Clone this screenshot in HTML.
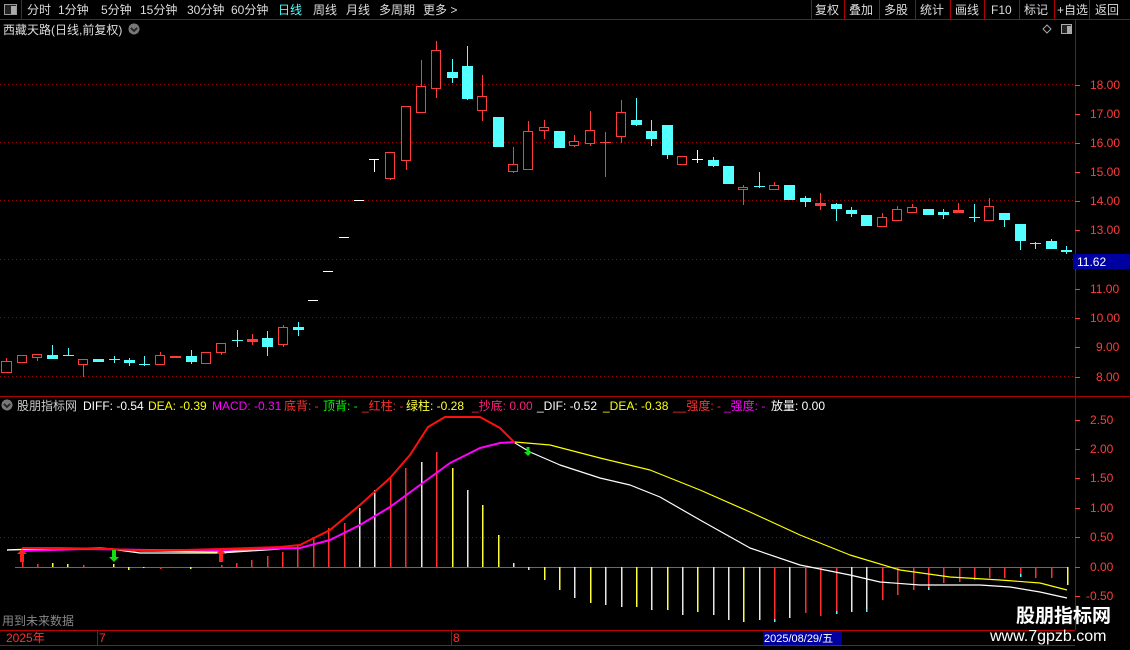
<!DOCTYPE html>
<html><head><meta charset="utf-8"><style>
body{margin:0;background:#000;width:1130px;height:650px;overflow:hidden;font-family:"Liberation Sans","Noto Sans CJK SC",sans-serif;font-size:12px;color:#ddd}
svg{position:absolute;left:0;top:0}
text{font-family:"Liberation Sans","Noto Sans CJK SC",sans-serif;font-size:12px}
.r{fill:#000;stroke:#ff3c3c;stroke-width:1}
.c{fill:#54ffff}
</style></head><body>
<svg width="1130" height="650" viewBox="0 0 1130 650" shape-rendering="crispEdges">
<!-- top bar -->
<line x1="0" y1="19.5" x2="1130" y2="19.5" stroke="#b00000"/>
<line x1="21.5" y1="0" x2="21.5" y2="19" stroke="#b00000"/>
<rect x="4.5" y="4.5" width="12" height="10" fill="#222" stroke="#999"/><rect x="11" y="6" width="5" height="8" fill="#aaa"/>
<g fill="#ddd">
<text x="27" y="14">分时</text><text x="58" y="14">1分钟</text><text x="101" y="14">5分钟</text><text x="140" y="14">15分钟</text><text x="187" y="14">30分钟</text><text x="231" y="14">60分钟</text>
<text x="278" y="14" fill="#54ffff">日线</text><text x="313" y="14">周线</text><text x="346" y="14">月线</text><text x="379" y="14">多周期</text><text x="423" y="14">更多 &gt;</text>
<text x="815" y="14">复权</text><text x="849" y="14">叠加</text><text x="884" y="14">多股</text><text x="920" y="14">统计</text><text x="955" y="14">画线</text><text x="991" y="14">F10</text><text x="1024" y="14">标记</text><text x="1057" y="14">+自选</text><text x="1095" y="14">返回</text>
</g>
<g stroke="#b00000"><line x1="811.5" y1="0" x2="811.5" y2="19"/><line x1="844.5" y1="0" x2="844.5" y2="19"/><line x1="879.5" y1="0" x2="879.5" y2="19"/><line x1="915.5" y1="0" x2="915.5" y2="19"/><line x1="950.5" y1="0" x2="950.5" y2="19"/><line x1="984.5" y1="0" x2="984.5" y2="19"/><line x1="1019.5" y1="0" x2="1019.5" y2="19"/><line x1="1054.5" y1="0" x2="1054.5" y2="19"/><line x1="1089.5" y1="0" x2="1089.5" y2="19"/></g>
<text x="3" y="34" fill="#ddd">西藏天路(日线,前复权)</text>
<circle cx="134" cy="29" r="5.5" fill="#777"/><path d="M131 28l3 3 3-3" stroke="#222" fill="none" stroke-width="1.5"/>
<path d="M1047 25l4 4-4 4-4-4z" fill="none" stroke="#aaa" shape-rendering="auto"/>
<rect x="1061.5" y="24.5" width="10" height="9" fill="#222" stroke="#aaa"/><rect x="1067" y="26" width="4" height="7" fill="#aaa"/>
<!-- right axis -->
<line x1="1075.5" y1="20" x2="1075.5" y2="630" stroke="#b00000"/>
<line x1="0" y1="396.5" x2="1130" y2="396.5" stroke="#b00000"/>
<g stroke="#a00000" stroke-dasharray="1 3"><line x1="0" y1="84.5" x2="1075" y2="84.5"/><line x1="0" y1="142.5" x2="1075" y2="142.5"/><line x1="0" y1="200.5" x2="1075" y2="200.5"/><line x1="0" y1="259.5" x2="1075" y2="259.5"/><line x1="0" y1="317.5" x2="1075" y2="317.5"/><line x1="0" y1="376.5" x2="1075" y2="376.5"/><line x1="0" y1="537.5" x2="1075" y2="537.5"/></g>
<g fill="#ff3c3c"><text x="1090" y="89">18.00</text><text x="1090" y="118">17.00</text><text x="1090" y="147">16.00</text><text x="1090" y="176">15.00</text><text x="1090" y="205">14.00</text><text x="1090" y="234">13.00</text><text x="1090" y="293">11.00</text><text x="1090" y="322">10.00</text><text x="1096" y="351">9.00</text><text x="1096" y="381">8.00</text>
<text x="1090" y="424">2.50</text><text x="1090" y="453">2.00</text><text x="1090" y="482">1.50</text><text x="1090" y="512">1.00</text><text x="1090" y="541">0.50</text><text x="1090" y="571">0.00</text><text x="1086" y="600">-0.50</text></g>
<g stroke="#ff3c3c"><line x1="1075" y1="85.5" x2="1080" y2="85.5"/><line x1="1075" y1="114.5" x2="1080" y2="114.5"/><line x1="1075" y1="143.5" x2="1080" y2="143.5"/><line x1="1075" y1="172.5" x2="1080" y2="172.5"/><line x1="1075" y1="201.5" x2="1080" y2="201.5"/><line x1="1075" y1="230.5" x2="1080" y2="230.5"/><line x1="1075" y1="289.5" x2="1080" y2="289.5"/><line x1="1075" y1="318.5" x2="1080" y2="318.5"/><line x1="1075" y1="347.5" x2="1080" y2="347.5"/><line x1="1075" y1="377.5" x2="1080" y2="377.5"/>
<line x1="1075" y1="420.5" x2="1080" y2="420.5"/><line x1="1075" y1="449.5" x2="1080" y2="449.5"/><line x1="1075" y1="478.5" x2="1080" y2="478.5"/><line x1="1075" y1="508.5" x2="1080" y2="508.5"/><line x1="1075" y1="537.5" x2="1080" y2="537.5"/><line x1="1075" y1="567.5" x2="1080" y2="567.5"/><line x1="1075" y1="596.5" x2="1080" y2="596.5"/></g>
<rect x="1073" y="254" width="57" height="15" fill="#0000a0"/><text x="1077" y="266" fill="#fff">11.62</text>

<!-- candles -->
<g stroke="#ff3c3c">
<line x1="6.5" y1="358" x2="6.5" y2="373"/><line x1="37.5" y1="354" x2="37.5" y2="361"/><line x1="83.5" y1="359" x2="83.5" y2="377"/><line x1="160.5" y1="352" x2="160.5" y2="364"/><line x1="221.5" y1="343" x2="221.5" y2="355"/><line x1="252.5" y1="334" x2="252.5" y2="345"/><line x1="283.5" y1="325" x2="283.5" y2="347"/>
<line x1="390.5" y1="152" x2="390.5" y2="180"/><line x1="406.5" y1="106" x2="406.5" y2="170"/><line x1="421.5" y1="60" x2="421.5" y2="112"/><line x1="436.5" y1="41" x2="436.5" y2="98"/><line x1="482.5" y1="75" x2="482.5" y2="121"/><line x1="513.5" y1="147" x2="513.5" y2="173"/><line x1="528.5" y1="121" x2="528.5" y2="169"/><line x1="544.5" y1="120" x2="544.5" y2="139"/>
<line x1="574.5" y1="135" x2="574.5" y2="147"/><line x1="590.5" y1="111" x2="590.5" y2="146"/><line x1="605.5" y1="132" x2="605.5" y2="177"/><line x1="600" y1="142.5" x2="611" y2="142.5"/><line x1="621.5" y1="100" x2="621.5" y2="143"/>
<line x1="743.5" y1="185" x2="743.5" y2="205"/><line x1="774.5" y1="182" x2="774.5" y2="189"/><line x1="820.5" y1="193" x2="820.5" y2="210"/><line x1="882.5" y1="213" x2="882.5" y2="226"/><line x1="897.5" y1="206" x2="897.5" y2="220"/><line x1="912.5" y1="204" x2="912.5" y2="212"/><line x1="958.5" y1="203" x2="958.5" y2="213"/><line x1="989.5" y1="198" x2="989.5" y2="221"/>
</g>
<g class="r">
<rect x="1.5" y="361.5" width="10" height="11"/><rect x="17.5" y="355.5" width="9" height="7"/><rect x="32.5" y="354.5" width="9" height="3"/><rect x="78.5" y="359.5" width="9" height="5"/><rect x="155.5" y="355.5" width="9" height="9"/><rect x="201.5" y="352.5" width="9" height="11"/><rect x="216.5" y="343.5" width="9" height="9"/><rect x="278.5" y="327.5" width="9" height="17"/>
<rect x="385.5" y="152.5" width="9" height="26"/><rect x="401.5" y="106.5" width="9" height="54"/><rect x="416.5" y="86.5" width="9" height="26"/><rect x="431.5" y="50.5" width="9" height="38"/><rect x="477.5" y="96.5" width="9" height="14"/><rect x="508.5" y="164.5" width="9" height="7"/><rect x="523.5" y="131.5" width="9" height="38"/><rect x="539.5" y="127.5" width="9" height="3"/>
<rect x="569.5" y="141.5" width="9" height="4"/><rect x="585.5" y="130.5" width="9" height="13"/><rect x="616.5" y="112.5" width="9" height="24"/><rect x="677.5" y="156.5" width="9" height="8"/><rect x="738.5" y="187.5" width="9" height="2"/><rect x="769.5" y="185.5" width="9" height="4"/>
<rect x="877.5" y="217.5" width="9" height="9"/><rect x="892.5" y="209.5" width="9" height="11"/><rect x="907.5" y="207.5" width="9" height="5"/><rect x="984.5" y="206.5" width="9" height="14"/>
</g>
<g fill="#ff3c3c"><rect x="170" y="356" width="11" height="2"/><rect x="247" y="339" width="11" height="3"/><rect x="815" y="203" width="11" height="3"/><rect x="953" y="210" width="11" height="3"/></g>
<g stroke="#54ffff">
<line x1="52.5" y1="345" x2="52.5" y2="359"/><line x1="68.5" y1="348" x2="68.5" y2="356"/><line x1="63" y1="355.5" x2="74" y2="355.5"/><line x1="114.5" y1="356" x2="114.5" y2="363"/><line x1="109" y1="359.5" x2="120" y2="359.5"/><line x1="129.5" y1="358" x2="129.5" y2="366"/><line x1="144.5" y1="356" x2="144.5" y2="366"/><line x1="139" y1="364.5" x2="150" y2="364.5"/><line x1="191.5" y1="350" x2="191.5" y2="364"/><line x1="237.5" y1="330" x2="237.5" y2="347"/><line x1="232" y1="340.5" x2="243" y2="340.5"/><line x1="267.5" y1="331" x2="267.5" y2="356"/><line x1="298.5" y1="322" x2="298.5" y2="336"/>
<line x1="452.5" y1="59" x2="452.5" y2="83"/><line x1="467.5" y1="46" x2="467.5" y2="100"/><line x1="636.5" y1="98" x2="636.5" y2="126"/><line x1="651.5" y1="120" x2="651.5" y2="146"/><line x1="667.5" y1="125" x2="667.5" y2="159"/><line x1="713.5" y1="157" x2="713.5" y2="167"/><line x1="759.5" y1="172" x2="759.5" y2="188"/><line x1="754" y1="186.5" x2="765" y2="186.5"/><line x1="805.5" y1="196" x2="805.5" y2="207"/><line x1="836.5" y1="203" x2="836.5" y2="221"/><line x1="851.5" y1="207" x2="851.5" y2="217"/><line x1="943.5" y1="209" x2="943.5" y2="219"/><line x1="974.5" y1="204" x2="974.5" y2="222"/><line x1="969" y1="217.5" x2="980" y2="217.5"/><line x1="1004.5" y1="213" x2="1004.5" y2="227"/><line x1="1020.5" y1="224" x2="1020.5" y2="250"/><line x1="1035.5" y1="242" x2="1035.5" y2="249"/><line x1="1030" y1="243.5" x2="1041" y2="243.5"/><line x1="1051.5" y1="239" x2="1051.5" y2="249"/><line x1="1066.5" y1="246" x2="1066.5" y2="254"/>
</g>
<g class="c">
<rect x="47" y="355" width="11" height="4"/><rect x="93" y="359" width="11" height="3"/><rect x="124" y="360" width="11" height="3"/><rect x="186" y="356" width="11" height="6"/><rect x="262" y="338" width="11" height="9"/><rect x="293" y="327" width="11" height="3"/>
<rect x="447" y="72" width="11" height="6"/><rect x="462" y="66" width="11" height="33"/><rect x="493" y="117" width="11" height="30"/><rect x="554" y="131" width="11" height="17"/><rect x="631" y="120" width="11" height="5"/><rect x="646" y="131" width="11" height="8"/><rect x="662" y="125" width="11" height="30"/><rect x="708" y="160" width="11" height="6"/><rect x="723" y="166" width="11" height="18"/><rect x="784" y="185" width="11" height="15"/><rect x="800" y="198" width="11" height="4"/><rect x="831" y="204" width="11" height="5"/><rect x="846" y="210" width="11" height="4"/><rect x="861" y="215" width="11" height="11"/><rect x="923" y="209" width="11" height="6"/><rect x="938" y="212" width="11" height="3"/><rect x="999" y="213" width="11" height="7"/><rect x="1015" y="224" width="11" height="17"/><rect x="1046" y="241" width="11" height="8"/><rect x="1061" y="250" width="11" height="2"/>
</g>
<g stroke="#fff">
<line x1="308" y1="300.5" x2="318" y2="300.5"/><line x1="323" y1="271.5" x2="333" y2="271.5"/><line x1="339" y1="237.5" x2="349" y2="237.5"/><line x1="354" y1="200.5" x2="364" y2="200.5"/>
<line x1="369" y1="159.5" x2="379" y2="159.5"/><line x1="374.5" y1="159" x2="374.5" y2="172"/>
<line x1="697.5" y1="150" x2="697.5" y2="163"/><line x1="692" y1="159.5" x2="703" y2="159.5"/>
</g>

<!-- indicator title -->
<circle cx="7" cy="405" r="5.5" fill="#777"/><path d="M4 404l3 3 3-3" stroke="#222" fill="none" stroke-width="1.5"/>
<text x="17" y="410" fill="#ccc">股朋指标网</text>
<text x="83" y="410" fill="#fff">DIFF: -0.54</text>
<text x="148" y="410" fill="#ffff00">DEA: -0.39</text>
<text x="212" y="410" fill="#ff00ff">MACD: -0.31</text>
<text x="284" y="410" fill="#ff3030">底背: -</text>
<text x="323" y="410" fill="#00ff00">顶背: -</text>
<text x="362" y="410" fill="#ff3030">_红柱: -</text>
<text x="406" y="410" fill="#ffff40">绿柱: -0.28</text>
<text x="472" y="410" fill="#ff2080">_抄底: 0.00</text>
<text x="537" y="410" fill="#fff">_DIF: -0.52</text>
<text x="603" y="410" fill="#ffff00">_DEA: -0.38</text>
<text x="673" y="410" fill="#ff3030">__强度: -</text>
<text x="724" y="410" fill="#ff00ff">_强度: -</text>
<text x="771" y="410" fill="#fff">放量: 0.00</text>

<!-- zero line -->
<line x1="15" y1="567.5" x2="1067" y2="567.5" stroke="#ff2060"/>
<!-- histogram -->
<g stroke-width="1.5">
<g stroke="#ff3030"><path d="M22.5 562V567M37.5 564V567M83.5 565V567M221.5 565V567M236.5 563V567M251.5 560V567M267.5 556V567M282.5 552V567M297.5 545V567M313.5 537V567M328.5 528V567M344.5 523V567M390.5 478V567M405.5 468V567M436.5 452V567M160.5 569V567"/>
<path d="M774.5 567V620M805.5 567V613M820.5 567V616M836.5 567V612M882.5 567V600M897.5 567V595M913.5 567V590M928.5 567V588M943.5 567V583M959.5 567V582M974.5 567V580M989.5 567V578M1004.5 567V578M1020.5 567V575M1035.5 567V578M1051.5 567V578"/></g>
<g stroke="#ffff40"><path d="M52.5 563V567M67.5 564V567M113.5 564V567M452.5 468V567M482.5 505V567M498.5 535V567M128.5 567V570M190.5 567V569"/>
<path d="M544.5 567V580M559.5 567V590M590.5 567V603M636.5 567V607M667.5 567V610M697.5 567V612M743.5 567V622M1067.5 567V585"/></g>
<g stroke="#e8e8e8"><path d="M359.5 508V567M374.5 490V567M421.5 462V567M467.5 490V567M513.5 563V567M143.5 567V568"/>
<path d="M528.5 567V570M574.5 567V598M605.5 567V605M621.5 567V607M651.5 567V610M682.5 567V615M713.5 567V615M728.5 567V620M759.5 567V620M789.5 567V618M851.5 567V612M866.5 567V610"/></g>
<g stroke="#54ffff"><path d="M774.5 619V622M836.5 611V614M866.5 609V612M928.5 587V590M1020.5 574V577"/></g>
</g>
<!-- lines -->
<g fill="none" shape-rendering="auto" stroke-linejoin="round">
<polyline stroke="#ffff00" stroke-width="1.2" points="7,550 30,549 100,548 140,551 220,552 280,548"/>
<polyline stroke="#fff" stroke-width="1.2" points="7,550 40,549 110,549 140,553 220,553 280,549"/>
<polyline stroke="#ff00ff" stroke-width="2" points="22,551 52,550 83,549 150,550 220,550 260,549 300,548 330,540 360,525 390,507 420,485 450,463 480,448 500,443 515,442"/>
<polyline stroke="#ff1010" stroke-width="2" points="22,548 60,548 110,549 150,551 220,549 280,547 300,545 330,530 360,505 390,478 410,455 428,427 445,417 480,417 500,428 515,443"/>
<polyline stroke="#ffff00" stroke-width="1.2" points="515,442 550,445 600,458 650,470 700,490 750,512 800,535 850,555 900,570 950,577 1000,580 1040,583 1067,590"/>
<polyline stroke="#fff" stroke-width="1.2" points="515,443 530,452 560,465 600,478 630,485 660,497 700,520 750,548 800,565 850,575 880,582 920,585 980,585 1010,587 1040,592 1067,598"/>
</g>
<!-- arrows -->
<g shape-rendering="auto">
<path d="M22 549l-5 5h3v8h4v-8h3z" fill="#ff2020"/>
<path d="M221 549l-5 5h3v8h4v-8h3z" fill="#ff2020"/>
<path d="M114 562l-5-5h3v-7h4v7h3z" fill="#10e010"/>
<path d="M528 456l-4-4h2.5v-5h3v5h2.5z" fill="#10e010"/>
</g>

<text x="2" y="625" fill="#888">用到未来数据</text>
<!-- date bar -->
<line x1="0" y1="630.5" x2="1075" y2="630.5" stroke="#c00000"/>
<line x1="0" y1="645.5" x2="1075" y2="645.5" stroke="#c00000"/>
<g stroke="#c00000"><line x1="97.5" y1="630" x2="97.5" y2="645"/><line x1="451.5" y1="630" x2="451.5" y2="645"/></g>
<text x="6" y="642" fill="#ff3030">2025年</text>
<text x="99" y="642" fill="#ff3030">7</text>
<text x="453" y="642" fill="#ff3030">8</text>
<rect x="763" y="631" width="79" height="14" fill="#0000a0"/>
<text x="764" y="642" fill="#fff" font-size="11" style="font-size:11px">2025/08/29/五</text>
<!-- watermark -->
<text x="1016" y="622" fill="#fff" style="font-size:19px;font-weight:bold">股朋指标网</text>
<text x="990" y="641" fill="#fff" style="font-size:16px">www.7gpzb.com</text>
</svg>
</body></html>
